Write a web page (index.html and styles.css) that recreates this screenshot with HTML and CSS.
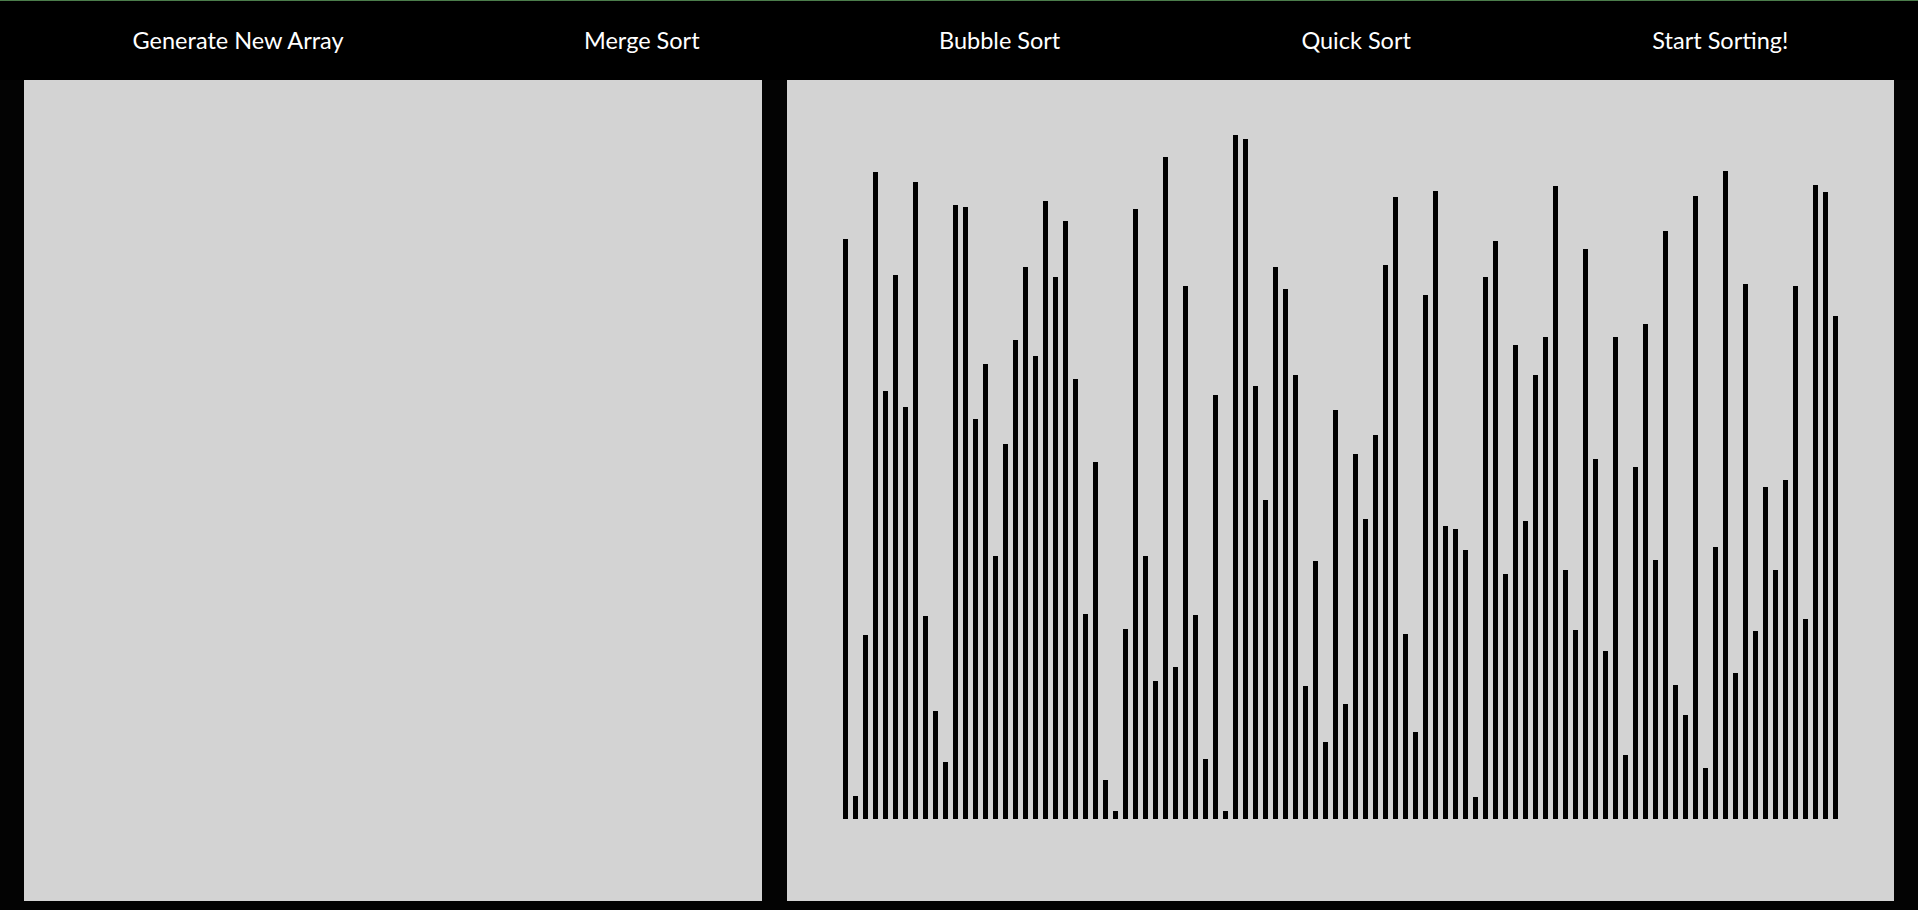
FILE: index.html
```html
<!DOCTYPE html>
<html lang="en">
<head>
<meta charset="utf-8">
<title>Sorting Visualizer</title>
<link rel="stylesheet" href="styles.css">
</head>
<body>
<header class="nav">
  <a class="nav-item w-generate">Generate New Array</a>
  <a class="nav-item w-merge">Merge Sort</a>
  <a class="nav-item w-bubble">Bubble Sort</a>
  <a class="nav-item w-quick">Quick Sort</a>
  <a class="nav-item w-start">Start Sorting!</a>
</header>
<main class="stage">
  <section class="panel panel-left"></section>
  <section class="panel panel-right">
    <div class="bar" style="height:580px"></div>
    <div class="bar" style="height:23px"></div>
    <div class="bar" style="height:184px"></div>
    <div class="bar" style="height:647px"></div>
    <div class="bar" style="height:428px"></div>
    <div class="bar" style="height:544px"></div>
    <div class="bar" style="height:412px"></div>
    <div class="bar" style="height:637px"></div>
    <div class="bar" style="height:203px"></div>
    <div class="bar" style="height:108px"></div>
    <div class="bar" style="height:57px"></div>
    <div class="bar" style="height:614px"></div>
    <div class="bar" style="height:612px"></div>
    <div class="bar" style="height:400px"></div>
    <div class="bar" style="height:455px"></div>
    <div class="bar" style="height:263px"></div>
    <div class="bar" style="height:375px"></div>
    <div class="bar" style="height:479px"></div>
    <div class="bar" style="height:552px"></div>
    <div class="bar" style="height:463px"></div>
    <div class="bar" style="height:618px"></div>
    <div class="bar" style="height:542px"></div>
    <div class="bar" style="height:598px"></div>
    <div class="bar" style="height:440px"></div>
    <div class="bar" style="height:205px"></div>
    <div class="bar" style="height:357px"></div>
    <div class="bar" style="height:39px"></div>
    <div class="bar" style="height:8px"></div>
    <div class="bar" style="height:190px"></div>
    <div class="bar" style="height:610px"></div>
    <div class="bar" style="height:263px"></div>
    <div class="bar" style="height:138px"></div>
    <div class="bar" style="height:662px"></div>
    <div class="bar" style="height:152px"></div>
    <div class="bar" style="height:533px"></div>
    <div class="bar" style="height:204px"></div>
    <div class="bar" style="height:60px"></div>
    <div class="bar" style="height:424px"></div>
    <div class="bar" style="height:8px"></div>
    <div class="bar" style="height:684px"></div>
    <div class="bar" style="height:680px"></div>
    <div class="bar" style="height:433px"></div>
    <div class="bar" style="height:319px"></div>
    <div class="bar" style="height:552px"></div>
    <div class="bar" style="height:530px"></div>
    <div class="bar" style="height:444px"></div>
    <div class="bar" style="height:133px"></div>
    <div class="bar" style="height:258px"></div>
    <div class="bar" style="height:77px"></div>
    <div class="bar" style="height:409px"></div>
    <div class="bar" style="height:115px"></div>
    <div class="bar" style="height:365px"></div>
    <div class="bar" style="height:300px"></div>
    <div class="bar" style="height:384px"></div>
    <div class="bar" style="height:554px"></div>
    <div class="bar" style="height:622px"></div>
    <div class="bar" style="height:185px"></div>
    <div class="bar" style="height:87px"></div>
    <div class="bar" style="height:524px"></div>
    <div class="bar" style="height:628px"></div>
    <div class="bar" style="height:293px"></div>
    <div class="bar" style="height:290px"></div>
    <div class="bar" style="height:269px"></div>
    <div class="bar" style="height:22px"></div>
    <div class="bar" style="height:542px"></div>
    <div class="bar" style="height:578px"></div>
    <div class="bar" style="height:245px"></div>
    <div class="bar" style="height:474px"></div>
    <div class="bar" style="height:298px"></div>
    <div class="bar" style="height:444px"></div>
    <div class="bar" style="height:482px"></div>
    <div class="bar" style="height:633px"></div>
    <div class="bar" style="height:249px"></div>
    <div class="bar" style="height:189px"></div>
    <div class="bar" style="height:570px"></div>
    <div class="bar" style="height:360px"></div>
    <div class="bar" style="height:168px"></div>
    <div class="bar" style="height:482px"></div>
    <div class="bar" style="height:64px"></div>
    <div class="bar" style="height:352px"></div>
    <div class="bar" style="height:495px"></div>
    <div class="bar" style="height:259px"></div>
    <div class="bar" style="height:588px"></div>
    <div class="bar" style="height:134px"></div>
    <div class="bar" style="height:104px"></div>
    <div class="bar" style="height:623px"></div>
    <div class="bar" style="height:51px"></div>
    <div class="bar" style="height:272px"></div>
    <div class="bar" style="height:648px"></div>
    <div class="bar" style="height:146px"></div>
    <div class="bar" style="height:535px"></div>
    <div class="bar" style="height:188px"></div>
    <div class="bar" style="height:332px"></div>
    <div class="bar" style="height:249px"></div>
    <div class="bar" style="height:339px"></div>
    <div class="bar" style="height:533px"></div>
    <div class="bar" style="height:200px"></div>
    <div class="bar" style="height:634px"></div>
    <div class="bar" style="height:627px"></div>
    <div class="bar" style="height:503px"></div>
  </section>
</main>
</body>
</html>
```

FILE: styles.css
```css
html, body {
  margin: 0;
  padding: 0;
}

body {
  width: 1918px;
  height: 910px;
  overflow: hidden;
  background: #030303;
  font-family: "Lato", "Open Sans", sans-serif;
}

.nav {
  box-sizing: border-box;
  height: 80px;
  border-top: 1px solid #4b7d4b;
  padding: 0 12px 2px;
  display: flex;
  align-items: center;
  justify-content: space-around;
  background: #000;
}

.nav-item {
  display: block;
  color: #ffffff;
  font-size: 23.5px;
  text-align: center;
  white-space: nowrap;
  cursor: pointer;
}

.w-generate { width: 213px; }
.w-merge { width: 116px; }
.w-bubble { width: 121px; }
.w-quick { width: 114px; }
.w-start { width: 134px; }

.stage {
  display: flex;
  gap: 25px;
  padding: 0 24px;
}

.panel {
  height: 821px;
  background: #d3d3d3;
}

.panel-left {
  width: 738px;
  flex: none;
}

.panel-right {
  flex: 1;
  box-sizing: border-box;
  padding-bottom: 82px;
  display: flex;
  justify-content: center;
  align-items: flex-end;
  gap: 5px;
}

.bar {
  width: 5px;
  flex: none;
  background: #000;
}
```
